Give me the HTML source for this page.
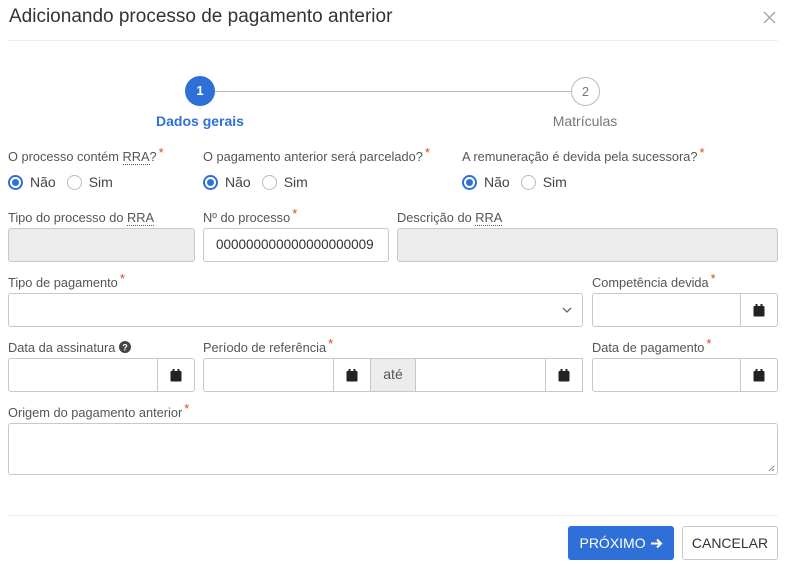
<!DOCTYPE html>
<html><head><meta charset="utf-8"><style>
*{box-sizing:border-box;margin:0;padding:0}
body{width:790px;height:565px;background:#fff;font-family:"Liberation Sans","DejaVu Sans",sans-serif;color:#444;position:relative;overflow:hidden}
.a{position:absolute}
.lbl{position:absolute;font-size:12.8px;color:#555;white-space:nowrap}
.lbl i{color:#e0451f;font-style:normal;font-size:13px;position:relative;top:-4px;margin-left:2px}
.u{border-bottom:1px dotted #555}
.inp{position:absolute;border:1px solid #c8c8c8;border-radius:3px;background:#fff}
.dis{background:#ececec}
.btn{position:absolute;top:0;bottom:0;width:37px;border-left:1px solid #c8c8c8;display:flex;align-items:center;justify-content:center}
.r{position:absolute;font-size:14px;color:#444;display:flex;align-items:center;white-space:nowrap}
.rad{width:15px;height:15px;border-radius:50%;border:1px solid #bbb;display:inline-block;margin-right:7px;position:relative}
.rad.on{border:2px solid #2f70d8}
.rad.on:after{content:"";position:absolute;left:2px;top:2px;width:7px;height:7px;border-radius:50%;background:#2f70d8}
</style></head><body>
<div class="a" style="left:9px;top:6px;font-size:19px;color:#333">Adicionando processo de pagamento anterior</div>
<svg class="a" style="left:763px;top:11px" width="13" height="13"><path d="M1 1L12 12M12 1L1 12" stroke="#aaa" stroke-width="1.5"/></svg>
<div class="a" style="left:8px;top:40px;width:770px;height:1px;background:#eee"></div>

<div class="a" style="left:215px;top:91px;width:356px;height:1px;background:#bbb"></div>
<div class="a" style="left:185px;top:76px;width:30px;height:30px;border-radius:50%;background:#2f70d8;color:#fff;font-size:13px;font-weight:bold;text-align:center;line-height:30px">1</div>
<div class="a" style="left:571px;top:77px;width:29px;height:29px;border-radius:50%;border:1px solid #bbb;color:#777;font-size:13px;text-align:center;line-height:27px;background:#fff">2</div>
<div class="a" style="left:140px;top:113px;width:120px;text-align:center;font-size:14px;color:#2f70d8;font-weight:bold">Dados gerais</div>
<div class="a" style="left:525px;top:113px;width:120px;text-align:center;font-size:14px;color:#777">Matrículas</div>

<div class="lbl" style="left:8px;top:149px">O processo contém <span class="u">RRA</span>?<i>*</i></div>
<div class="lbl" style="left:203px;top:149px">O pagamento anterior será parcelado?<i>*</i></div>
<div class="lbl" style="left:462px;top:149px">A remuneração é devida pela sucessora?<i>*</i></div>
<div class="r" style="left:8px;top:174px"><span class="rad on"></span>Não<span class="rad" style="margin-left:11px"></span>Sim</div>
<div class="r" style="left:203px;top:174px"><span class="rad on"></span>Não<span class="rad" style="margin-left:11px"></span>Sim</div>
<div class="r" style="left:462px;top:174px"><span class="rad on"></span>Não<span class="rad" style="margin-left:11px"></span>Sim</div>

<div class="lbl" style="left:8px;top:210px">Tipo do processo do <span class="u">RRA</span></div>
<div class="lbl" style="left:203px;top:210px">Nº do processo<i>*</i></div>
<div class="lbl" style="left:397px;top:210px">Descrição do <span class="u">RRA</span></div>
<div class="inp dis" style="left:8px;top:228px;width:187px;height:34px"></div>
<div class="inp" style="left:203px;top:228px;width:186px;height:34px;font-size:13.5px;color:#333;padding:8px 0 0 12px">000000000000000000009</div>
<div class="inp dis" style="left:397px;top:228px;width:381px;height:34px"></div>

<div class="lbl" style="left:8px;top:275px">Tipo de pagamento<i>*</i></div>
<div class="lbl" style="left:592px;top:275px">Competência devida<i>*</i></div>
<div class="inp" style="left:8px;top:293px;width:575px;height:34px"><svg class="a" style="right:10px;top:13px" width="10" height="7"><path d="M1 1L5 5L9 1" stroke="#666" fill="none" stroke-width="1.3"/></svg></div>
<div class="inp" style="left:592px;top:293px;width:186px;height:34px"><div class="btn" style="right:0"><svg width="12" height="13"><rect x="0.5" y="2" width="11" height="10.5" rx="1" fill="#222"/><rect x="2.5" y="0" width="2" height="3" fill="#222"/><rect x="7.5" y="0" width="2" height="3" fill="#222"/></svg></div></div>

<div class="lbl" style="left:8px;top:340px">Data da assinatura <svg width="12" height="12" style="vertical-align:-1px"><circle cx="6" cy="6" r="6" fill="#444"/><text x="6" y="9.5" font-size="9" font-weight="bold" fill="#fff" text-anchor="middle" font-family="Liberation Sans">?</text></svg></div>
<div class="lbl" style="left:203px;top:340px">Período de referência<i>*</i></div>
<div class="lbl" style="left:592px;top:340px">Data de pagamento<i>*</i></div>
<div class="inp" style="left:8px;top:358px;width:187px;height:34px"><div class="btn" style="right:0"><svg width="12" height="13"><rect x="0.5" y="2" width="11" height="10.5" rx="1" fill="#222"/><rect x="2.5" y="0" width="2" height="3" fill="#222"/><rect x="7.5" y="0" width="2" height="3" fill="#222"/></svg></div></div>
<div class="inp" style="left:203px;top:358px;width:168px;height:34px;border-radius:3px 0 0 3px"><div class="btn" style="right:0"><svg width="12" height="13"><rect x="0.5" y="2" width="11" height="10.5" rx="1" fill="#222"/><rect x="2.5" y="0" width="2" height="3" fill="#222"/><rect x="7.5" y="0" width="2" height="3" fill="#222"/></svg></div></div>
<div class="a" style="left:370px;top:358px;width:46px;height:34px;background:#ececec;border:1px solid #c8c8c8;font-size:14px;color:#555;text-align:center;line-height:30px">até</div>
<div class="inp" style="left:415px;top:358px;width:168px;height:34px;border-radius:0"><div class="btn" style="right:0"><svg width="12" height="13"><rect x="0.5" y="2" width="11" height="10.5" rx="1" fill="#222"/><rect x="2.5" y="0" width="2" height="3" fill="#222"/><rect x="7.5" y="0" width="2" height="3" fill="#222"/></svg></div></div>
<div class="inp" style="left:592px;top:358px;width:186px;height:34px"><div class="btn" style="right:0"><svg width="12" height="13"><rect x="0.5" y="2" width="11" height="10.5" rx="1" fill="#222"/><rect x="2.5" y="0" width="2" height="3" fill="#222"/><rect x="7.5" y="0" width="2" height="3" fill="#222"/></svg></div></div>

<div class="lbl" style="left:8px;top:405px">Origem do pagamento anterior<i>*</i></div>
<div class="inp" style="left:8px;top:423px;width:770px;height:52px"><svg class="a" style="right:2px;bottom:2px" width="7" height="7"><path d="M6 1L1 6M6 4L4 6" stroke="#888"/></svg></div>

<div class="a" style="left:8px;top:515px;width:770px;height:1px;background:#eee"></div>
<div class="a" style="left:568px;top:526px;width:106px;height:34px;background:#2f70d8;border-radius:3px;color:#fff;font-size:14px;text-align:center;line-height:34px">PRÓXIMO <svg width="13" height="11" style="vertical-align:-1px"><path d="M1 5.5H11M7 1.5L11 5.5L7 9.5" stroke="#fff" stroke-width="2" fill="none"/></svg></div>
<div class="a" style="left:682px;top:526px;width:96px;height:34px;border:1px solid #c8c8c8;border-radius:3px;color:#333;font-size:14px;text-align:center;line-height:32px">CANCELAR</div>
</body></html>
